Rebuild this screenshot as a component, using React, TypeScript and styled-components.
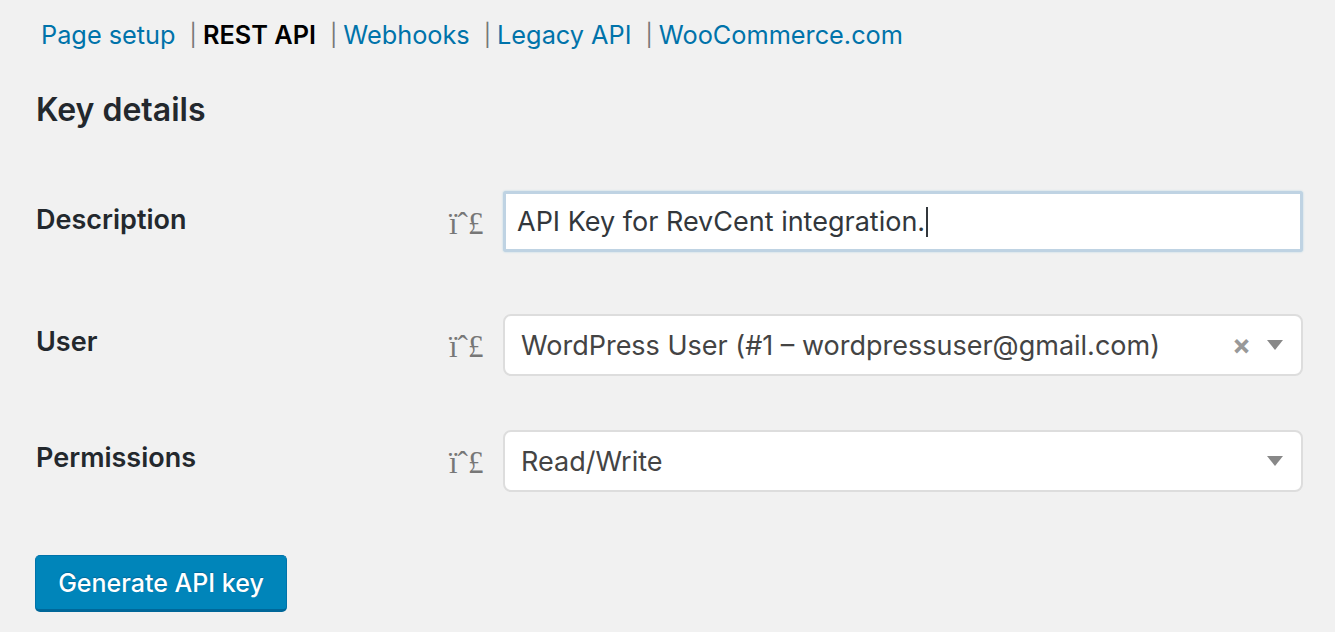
import { createGlobalStyle } from "styled-components";
import styled from "styled-components";

const GlobalStyle = createGlobalStyle`
  body {
    margin: 0;
    background: #f1f1f1;
    font-family: Inter, "Noto Sans", "Liberation Sans", sans-serif;
    color: #23282d;
  }
`;

const Page = styled.div`
  padding: 0 32px 0 36px;
`;

const SubNav = styled.ul`
  display: flex;
  align-items: center;
  list-style: none;
  margin: 0;
  padding: 18px 0 0 5px;
  font-size: 25.3px;
  line-height: 34px;
`;

const NavItem = styled.li`
  display: flex;
  align-items: center;
`;

const NavLink = styled.a<{ $current?: boolean }>`
  color: ${(p) => (p.$current ? "#000" : "#0073aa")};
  font-weight: ${(p) => (p.$current ? 600 : 400)};
  text-decoration: none;
`;

const Sep = styled.span`
  color: #777;
  font-size: 22px;
  margin: 0 6px 0 14px;
`;

const Title = styled.h2`
  font-size: 32px;
  font-weight: 600;
  margin: 38px 0 0;
  line-height: 40px;
`;

const Row = styled.div<{ $gap: number }>`
  display: grid;
  grid-template-columns: 413px 54px 800px;
  align-items: center;
  margin-top: ${(p) => p.$gap}px;
`;

const Label = styled.label<{ $shift: number }>`
  font-size: 27px;
  font-weight: 600;
  transform: translateY(${(p) => p.$shift}px);
`;

const Tip = styled.span`
  font-family: "Liberation Serif", serif;
  font-size: 31px;
  color: #777;
  padding-top: 4px;
`;

const TextInput = styled.div`
  height: 55px;
  border: 3px solid #bfd3e3;
  border-radius: 3px;
  background: #fff;
  box-shadow: 0 0 2px rgba(30, 140, 190, 0.3);
  display: flex;
  align-items: center;
  padding: 0 11px;
  font-size: 27px;
  color: #32373c;
`;

const Caret = styled.span`
  display: inline-block;
  width: 2px;
  height: 30px;
  background: #32373c;
  margin-left: 1px;
`;

const Select = styled.div`
  height: 58px;
  border: 2px solid #ddd;
  border-radius: 8px;
  background: #fff;
  display: flex;
  align-items: center;
  padding: 0 18px 0 16px;
  font-size: 27px;
  color: #444;
`;

const Value = styled.span`
  flex: 1;
`;

const Clear = styled.span`
  color: #999;
  font-size: 28px;
  font-weight: 700;
  margin-right: 16px;
`;

const Arrow = styled.span`
  width: 0;
  height: 0;
  border-left: 8px solid transparent;
  border-right: 8px solid transparent;
  border-top: 10px solid #888;
`;

const Button = styled.button`
  margin-top: 63px;
  margin-left: -1px;
  width: 252px;
  height: 57px;
  border: 1px solid #0073aa;
  border-bottom: 3px solid #006799;
  border-radius: 5px;
  background: #0085ba;
  color: #fff;
  font-family: inherit;
  font-size: 25px;
  font-weight: 500;
  text-shadow: 0 -1px 1px #006799;
  cursor: pointer;
`;

const links = [
  { text: "Page setup" },
  { text: "REST API", current: true },
  { text: "Webhooks" },
  { text: "Legacy API" },
  { text: "WooCommerce.com" },
];

export default function App() {
  return (
    <>
      <GlobalStyle />
      <Page>
        <SubNav>
          {links.map((l, i) => (
            <NavItem key={l.text}>
              {i > 0 && <Sep>|</Sep>}
              <NavLink href="#" $current={l.current}>
                {l.text}
              </NavLink>
            </NavItem>
          ))}
        </SubNav>
        <Title>Key details</Title>
        <Row $gap={61}>
          <Label $shift={-2}>Description</Label>
          <Tip>ïˆ£</Tip>
          <TextInput>
            API Key for RevCent integration.
            <Caret />
          </TextInput>
        </Row>
        <Row $gap={62}>
          <Label $shift={-4}>User</Label>
          <Tip>ïˆ£</Tip>
          <Select>
            <Value>WordPress User (#1 – wordpressuser@gmail.com)</Value>
            <Clear>×</Clear>
            <Arrow />
          </Select>
        </Row>
        <Row $gap={54}>
          <Label $shift={-4}>Permissions</Label>
          <Tip>ïˆ£</Tip>
          <Select>
            <Value>Read/Write</Value>
            <Arrow />
          </Select>
        </Row>
        <Button>Generate API key</Button>
      </Page>
    </>
  );
}
